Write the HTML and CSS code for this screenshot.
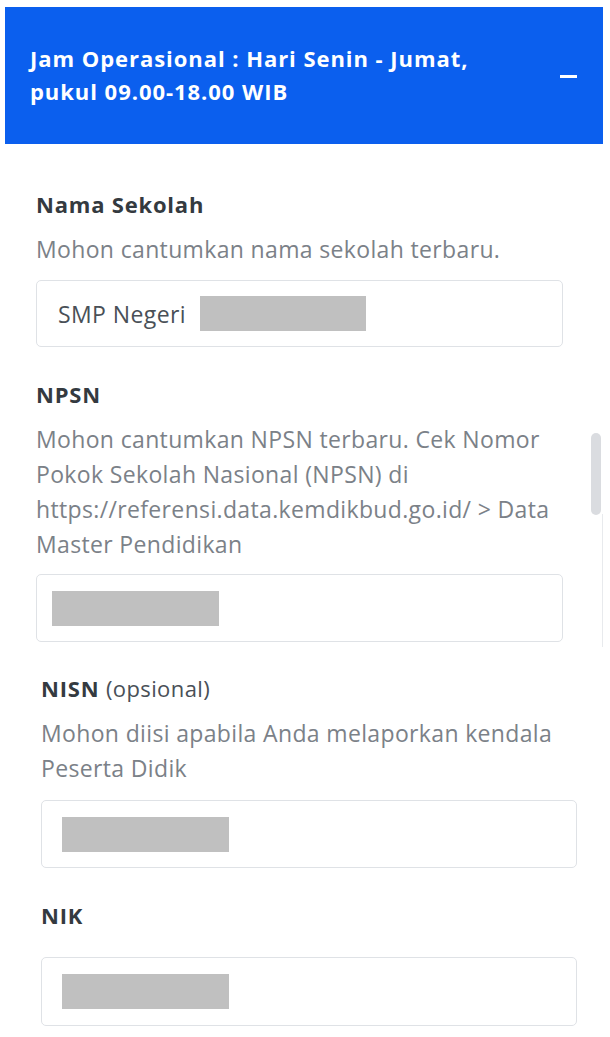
FILE: index.html
```html
<!DOCTYPE html>
<html lang="id">
<head>
<meta charset="utf-8">
<title>Form</title>
<link rel="stylesheet" href="styles.css">
</head>
<body>
<div class="page">
  <section class="panel panel-top">
    <div class="banner">
      <div class="banner-text">Jam Operasional : Hari Senin - Jumat,<br>pukul 09.00-18.00 WIB</div>
      <span class="banner-toggle"></span>
    </div>
    <div class="fields fields-top">
      <div class="field">
        <div class="label">Nama Sekolah</div>
        <div class="desc">Mohon cantumkan nama sekolah terbaru.</div>
        <div class="input input-first"><span class="value">SMP Negeri</span><span class="redact redact-inline"></span></div>
      </div>
      <div class="field">
        <div class="label">NPSN</div>
        <div class="desc">Mohon cantumkan NPSN terbaru. Cek Nomor Pokok Sekolah Nasional (NPSN) di https://referensi.data.kemdikbud.go.id/ &gt; Data Master Pendidikan</div>
        <div class="input input-npsn"><span class="redact"></span></div>
      </div>
    </div>
    <div class="scroll-track"></div>
    <div class="scroll-thumb"></div>
  </section>
  <section class="panel panel-bottom">
    <div class="fields fields-bottom">
      <div class="field">
        <div class="label">NISN <span class="opt">(opsional)</span></div>
        <div class="desc">Mohon diisi apabila Anda melaporkan kendala Peserta Didik</div>
        <div class="input input-tall"><span class="redact"></span></div>
      </div>
      <div class="field">
        <div class="label">NIK</div>
        <div class="input input-tall input-nodesc"><span class="redact"></span></div>
      </div>
    </div>
  </section>
</div>
</body>
</html>
```
FILE: styles.css
```css
* { box-sizing: border-box; }
html, body { margin: 0; padding: 0; background: #ffffff; }
body {
  font-family: "Open Sans", "Noto Sans", "DejaVu Sans", sans-serif;
  color: #343a40;
  width: 610px;
  overflow: hidden;
}
.page { width: 610px; }
.panel { position: relative; }
.panel-top { height: 650px; padding-top: 7px; }
.banner {
  margin-left: 5px;
  width: 598px;
  height: 137px;
  background: #0b5fee;
  display: flex;
  align-items: center;
  justify-content: space-between;
  padding: 0 26px 0 25px;
}
.banner-text {
  color: #ffffff;
  font-weight: 700;
  font-size: 22px;
  letter-spacing: 0.95px;
  line-height: 33px;
  padding-bottom: 2px;
  white-space: nowrap;
}
.banner-toggle {
  display: block;
  flex: none;
  width: 17px;
  height: 3px;
  background: #ffffff;
  margin-top: 2px;
}
.fields-top { margin-left: 36px; width: 527px; padding-top: 45px; }
.fields-bottom { margin-left: 41px; width: 536px; padding-top: 23px; }
.field + .field { margin-top: 32px; }
.label {
  font-weight: 700;
  font-size: 22px;
  letter-spacing: 0.8px;
  line-height: 30px;
  color: #343a40;
}
.opt { font-weight: 400; color: #495057; letter-spacing: 0.4px; }
.desc {
  margin-top: 13px;
  font-size: 23px;
  letter-spacing: 0.35px;
  line-height: 35px;
  color: #7b8188;
}
.input {
  margin-top: 12px;
  height: 67px;
  border: 1px solid #dfe2e6;
  border-radius: 5px;
  display: flex;
  align-items: center;
  padding-left: 21px;
}
.input-first { margin-top: 13px; }
.input-npsn { height: 68px; padding-left: 15px; }
.input-tall { height: 68px; margin-top: 14px; padding-left: 20px; }
.input-nodesc { margin-top: 27px; height: 69px; }
.value { font-size: 23px; letter-spacing: 0.4px; color: #495057; margin-right: 14px; }
.redact {
  display: block;
  flex: none;
  width: 167px;
  height: 35px;
  background: #c0c0c0;
}
.redact-inline { width: 166px; }
.scroll-thumb {
  position: absolute;
  left: 591px;
  top: 433px;
  width: 10px;
  height: 82px;
  border-radius: 5px;
  background: #dadce0;
}
.scroll-track {
  position: absolute;
  left: 602px;
  top: 514px;
  width: 1px;
  height: 133px;
  background: #e8eaed;
}
```
